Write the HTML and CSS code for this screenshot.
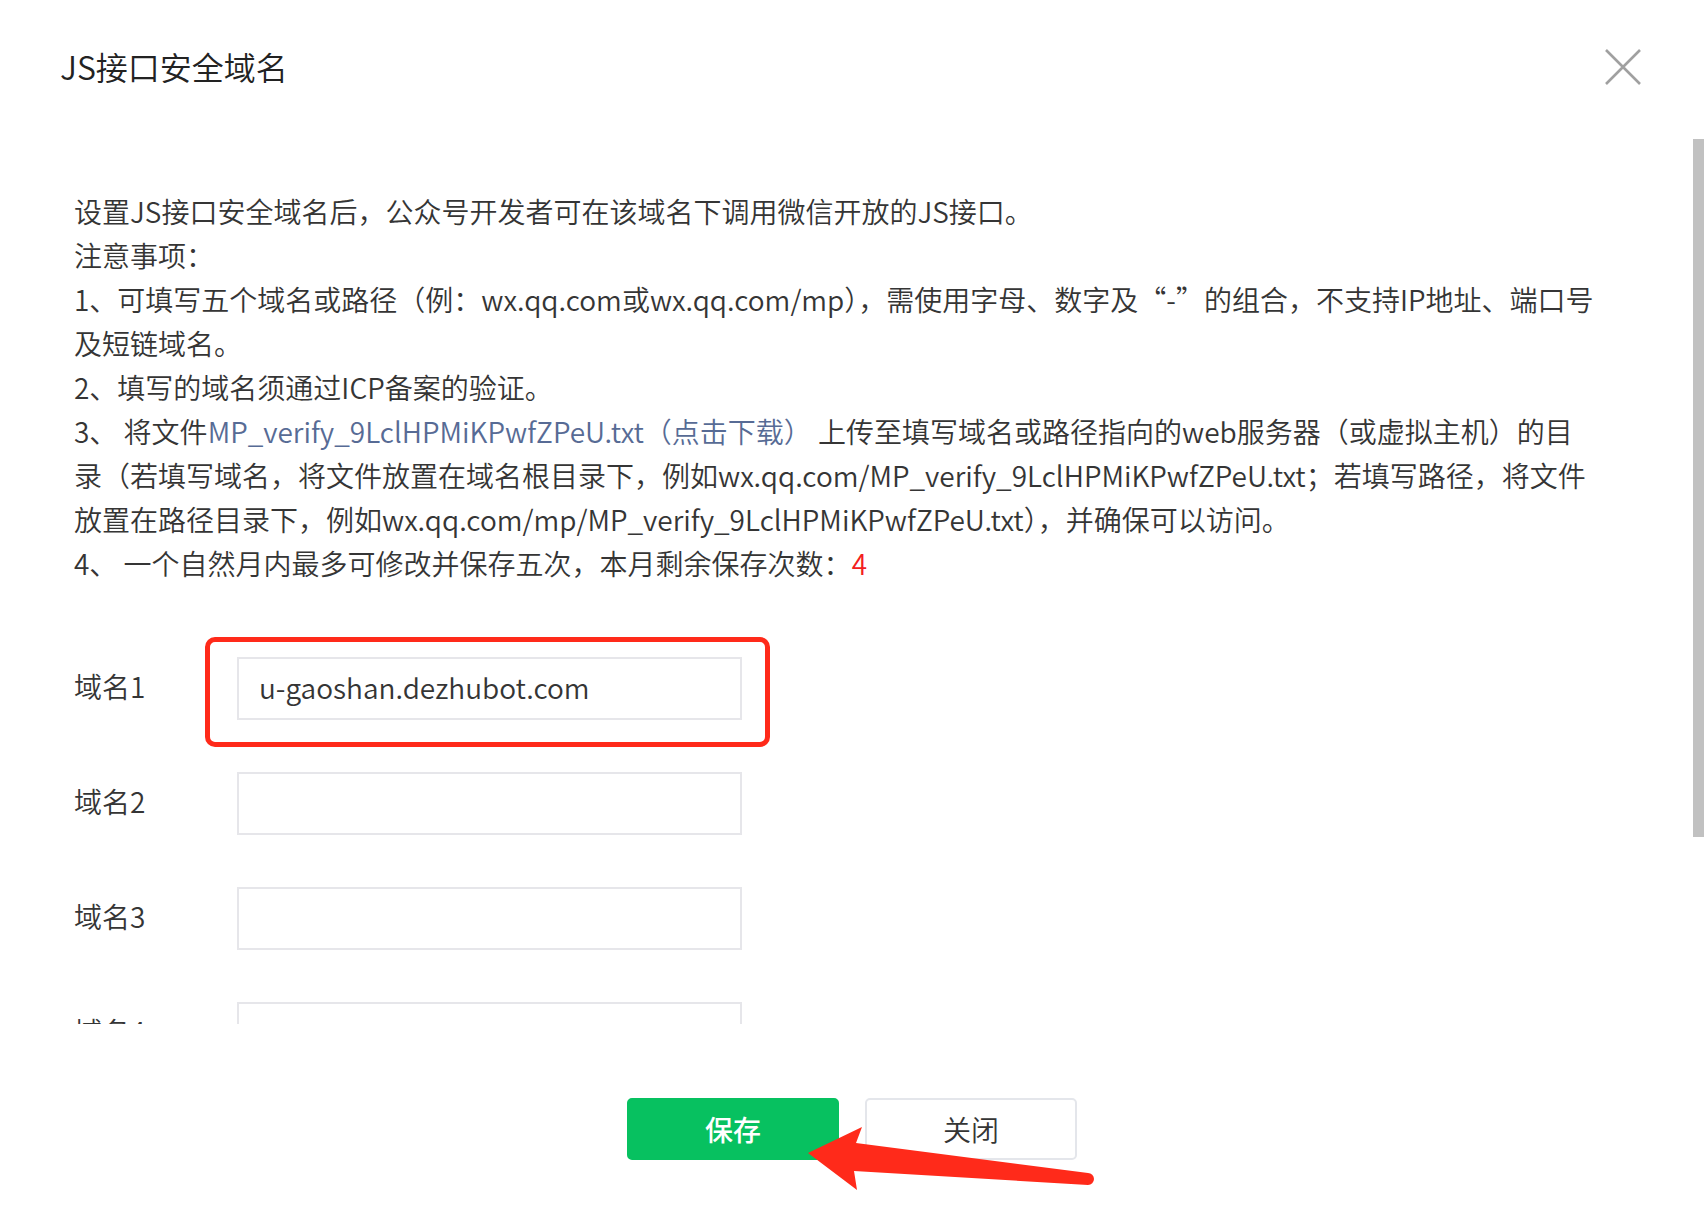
FILE: index.html
```html
<!DOCTYPE html>
<html lang="zh-CN">
<head>
    <meta charset="UTF-8">
    <meta name="viewport" content="width=device-width, initial-scale=1.0">
    <title>JS接口安全域名</title>
    <link rel="stylesheet" href="styles.css">
</head>
<body>
    <div class="dialog">
        <div class="dialog-hd">
            <h3 class="dialog-title">JS接口安全域名</h3>
            <a class="dialog-close" href="javascript:;" title="关闭">
                <svg width="36" height="36" viewBox="0 0 36 36">
                    <path d="M1 1 L35 35 M35 1 L1 35" stroke="#a0a0a0" stroke-width="2.6" fill="none"/>
                </svg>
            </a>
        </div>

        <div class="dialog-bd-wrap">
            <div class="dialog-bd">
                <div class="tips">
                    <p>设置JS接口安全域名后，公众号开发者可在该域名下调用微信开放的JS接口。</p>
                    <p>注意事项：</p>
                    <p>1、可填写五个域名或路径（例：wx.qq.com或wx.qq.com/mp），需使用字母、数字及“-”的组合，不支持IP地址、端口号及短链域名。</p>
                    <p>2、填写的域名须通过ICP备案的验证。</p>
                    <p>3、 将文件<a class="link" href="javascript:;">MP_verify_9LclHPMiKPwfZPeU.txt（点击下载）</a> 上传至填写域名或路径指向的web服务器（或虚拟主机）的目录（若填写域名，将文件放置在域名根目录下，例如wx.qq.com/MP_verify_9LclHPMiKPwfZPeU.txt；若填写路径，将文件放置在路径目录下，例如wx.qq.com/mp/MP_verify_9LclHPMiKPwfZPeU.txt），并确保可以访问。</p>
                    <p>4、 一个自然月内最多可修改并保存五次，本月剩余保存次数：<em class="num">4</em></p>
                </div>

                <div class="form">
                    <div class="form-row">
                        <label class="form-label">域名1</label>
                        <div class="field">
                            <input class="input" type="text" value="u-gaoshan.dezhubot.com">
                            <span class="mark-box"></span>
                        </div>
                    </div>
                    <div class="form-row">
                        <label class="form-label">域名2</label>
                        <div class="field"><input class="input" type="text"></div>
                    </div>
                    <div class="form-row">
                        <label class="form-label">域名3</label>
                        <div class="field"><input class="input" type="text"></div>
                    </div>
                    <div class="form-row">
                        <label class="form-label">域名4</label>
                        <div class="field"><input class="input" type="text"></div>
                    </div>
                    <div class="form-row">
                        <label class="form-label">域名5</label>
                        <div class="field"><input class="input" type="text"></div>
                    </div>
                </div>
            </div>
            <div class="scroll-thumb"></div>
        </div>

        <div class="dialog-ft">
            <button class="btn btn-primary">保存</button>
            <button class="btn btn-default">关闭</button>
            <!-- annotation arrow -->
            <svg class="mark-arrow" width="300" height="80" viewBox="0 0 300 80">
                <path d="M8 33 L62 7 L56 23 L288 53 A6 6 0 0 1 288 65 L54 51 L57 70 Z" fill="#ff2a1a"/>
            </svg>
        </div>
    </div>
</body>
</html>
```

FILE: styles.css
```css
* {
    box-sizing: border-box;
}
body {
    margin: 0;
    background: #fff;
    font-family: "Noto Sans CJK SC", "Liberation Sans", sans-serif;
    font-weight: 350;
    color: #353535;
}
.dialog {
    width: 1704px;
    height: 1222px;
    display: flex;
    flex-direction: column;
}
.dialog-hd {
    height: 139px;
    flex: none;
    display: flex;
    justify-content: space-between;
    align-items: flex-start;
    padding: 44px 63px 0 60px;
}
.dialog-title {
    margin: 0;
    font-size: 32px;
    font-weight: 350;
    line-height: 44px;
    color: #222;
}
.dialog-close {
    display: block;
    width: 36px;
    height: 36px;
    margin-top: 5px;
}
.dialog-close svg {
    display: block;
}
.dialog-bd-wrap {
    position: relative;
    height: 885px;
    flex: none;
}
.dialog-bd {
    height: 100%;
    overflow-y: auto;
    scrollbar-width: none;
    padding: 50px 104px 81px 74px;
}
.dialog-bd::-webkit-scrollbar {
    display: none;
}
.scroll-thumb {
    position: absolute;
    top: 0;
    right: 0;
    width: 11px;
    height: 698px;
    background: #c1c1c1;
}
.tips {
    font-size: 28px;
    line-height: 44px;
}
.tips p {
    margin: 0;
}
.link {
    color: #576b95;
    text-decoration: none;
}
.num {
    font-style: normal;
    color: #f32020;
}
.form {
    margin-top: 72px;
    display: flex;
    flex-direction: column;
    gap: 52px;
}
.form-row {
    display: flex;
    align-items: center;
}
.form-label {
    width: 163px;
    flex: none;
    font-size: 28px;
    line-height: 44px;
    margin-top: -6px;
}
.field {
    position: relative;
    width: 505px;
}
.input {
    display: block;
    width: 100%;
    height: 63px;
    border: 2px solid #e6e6ea;
    border-radius: 0;
    padding: 0 20px 3px;
    font-family: inherit;
    font-weight: inherit;
    font-size: 28px;
    color: #353535;
    outline: none;
    background: #fff;
}
.mark-box {
    position: absolute;
    left: -32px;
    right: -28px;
    top: -20px;
    bottom: -27px;
    border: 5px solid #ff2a1a;
    border-radius: 10px;
    pointer-events: none;
}
.dialog-ft {
    position: relative;
    flex: 1;
    display: flex;
    justify-content: center;
    align-items: flex-start;
    gap: 26px;
    padding-top: 74px;
}
.btn {
    width: 212px;
    height: 62px;
    border-radius: 5px;
    font-family: inherit;
    font-size: 28px;
    cursor: pointer;
}
.btn-primary {
    background: #07c160;
    border: 2px solid #07c160;
    color: #fff;
    font-weight: 500;
}
.btn-default {
    background: #fff;
    border: 2px solid #e4e6eb;
    color: #353535;
    font-weight: 350;
}
.mark-arrow {
    position: absolute;
    left: 800px;
    top: 96px;
}
```
